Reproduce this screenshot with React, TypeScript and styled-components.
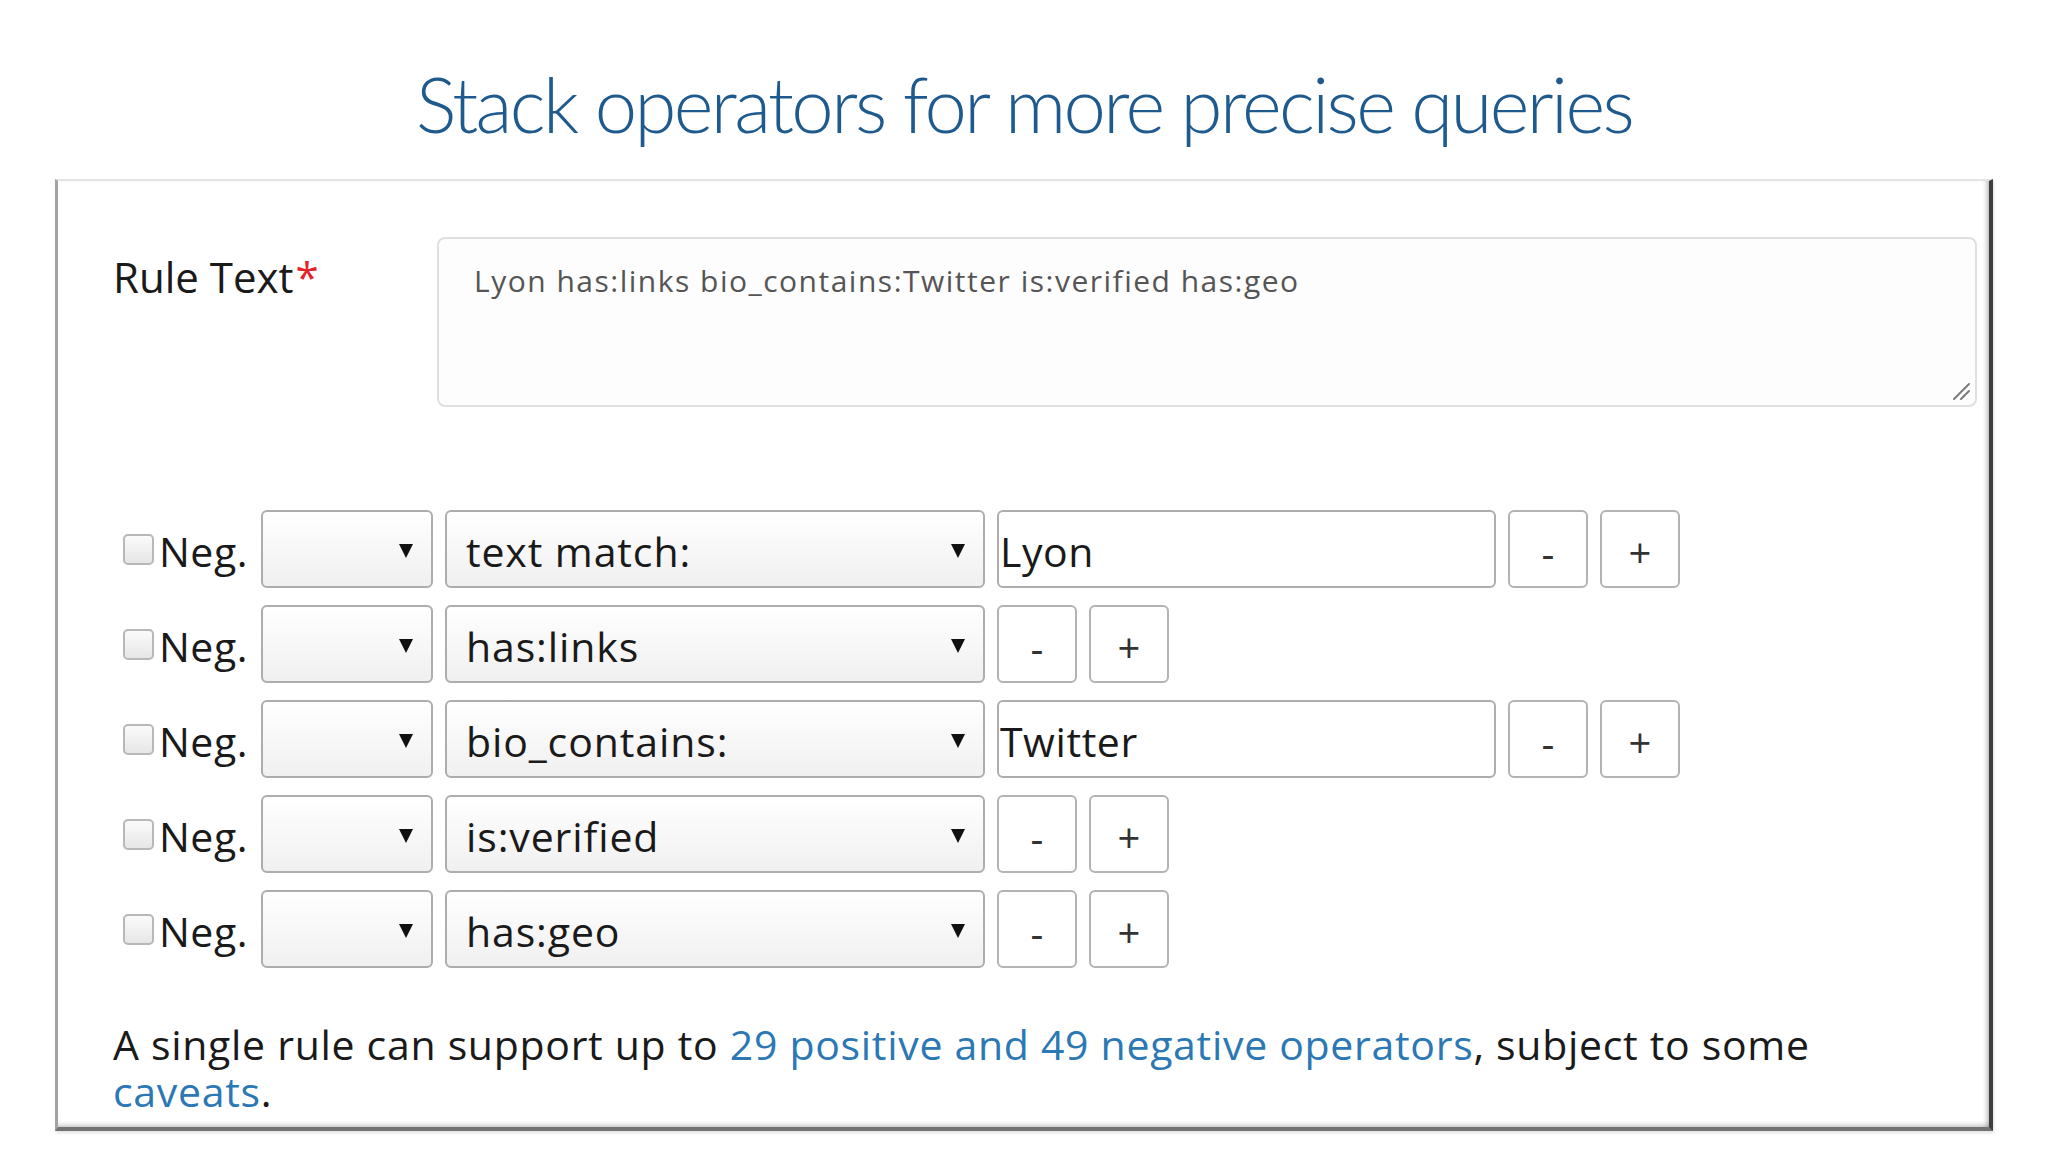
import React from "react";
import styled, { createGlobalStyle } from "styled-components";

const GlobalStyle = createGlobalStyle`
  html, body {
    margin: 0;
    padding: 0;
    background: #ffffff;
  }
  body {
    width: 2048px;
    height: 1152px;
    overflow: hidden;
    font-family: "Open Sans", "Liberation Sans", sans-serif;
    color: #1a1a1a;
  }
`;

const Page = styled.div`
  width: 2048px;
  height: 1152px;
  display: flex;
  flex-direction: column;
  align-items: flex-start;
`;

const Title = styled.h1`
  align-self: stretch;
  margin: 66px 0 0 0;
  text-align: center;
  font-family: "Lato", "Open Sans", sans-serif;
  font-weight: 300;
  font-size: 76px;
  line-height: 76px;
  letter-spacing: -2.6px;
  color: #1f5a8e;
`;

const Panel = styled.section`
  box-sizing: border-box;
  margin: 37px 0 0 55px;
  width: 1938px;
  height: 952px;
  background: #ffffff;
  border-top: 2px solid #e4e4e4;
  border-left: 3px solid #a3a3a3;
  border-right: 4px solid #3e3e3e;
  border-bottom: 4px solid #737373;
  box-shadow: inset -5px 0 5px -3px rgba(0, 0, 0, 0.28),
    inset 0 -5px 5px -3px rgba(0, 0, 0, 0.22), 1px 2px 3px rgba(0, 0, 0, 0.12);
  padding: 56px 12px 0 55px;
  display: flex;
  flex-direction: column;
`;

const RuleRow = styled.div`
  display: grid;
  grid-template-columns: 324px 1fr;
  align-items: start;
`;

const Label = styled.label`
  padding-top: 15px;
  font-size: 42px;
  line-height: 1.2;
  color: #1a1a1a;
`;

const Required = styled.span`
  color: #e5232b;
  margin-left: 2px;
`;

const TextAreaBox = styled.div`
  position: relative;
  box-sizing: border-box;
  height: 170px;
  border: 2px solid #e0e0e0;
  border-radius: 8px;
  background: #fdfdfd;
  padding: 24px 35px;
  font-size: 30px;
  letter-spacing: 1.5px;
  line-height: 1.2;
  color: #555555;
`;

const Grip = styled.svg`
  position: absolute;
  right: 3px;
  bottom: 3px;
  width: 20px;
  height: 20px;
`;

const Operators = styled.div`
  margin-top: 103px;
  padding-left: 10px;
  display: flex;
  flex-direction: column;
  gap: 17px;
`;

const OpRow = styled.div`
  display: flex;
  align-items: center;
  height: 78px;
  gap: 12px;
`;

const NegGroup = styled.div`
  display: flex;
  align-items: center;
  gap: 5px;
  margin-right: 1px;
`;

const CheckBox = styled.span`
  box-sizing: border-box;
  width: 31px;
  height: 31px;
  border: 2px solid #b8b8b8;
  border-radius: 5px;
  background: linear-gradient(#fbfbfb, #e6e6e6);
`;

const NegLabel = styled.span`
  font-size: 41px;
  letter-spacing: 0.5px;
  line-height: 1.2;
  padding-top: 6px;
  color: #1a1a1a;
`;

const Select = styled.div<{ $w: number }>`
  position: relative;
  box-sizing: border-box;
  width: ${(p) => p.$w}px;
  height: 78px;
  border: 2px solid #adadad;
  border-radius: 6px;
  background: linear-gradient(#ffffff, #f0f0f0);
  display: flex;
  align-items: center;
  padding: 6px 0 0 19px;
  font-size: 41px;
  letter-spacing: 0.9px;
  line-height: 1.2;
  color: #1a1a1a;
`;

const Arrow = styled.span`
  position: absolute;
  right: 18px;
  top: 32px;
  width: 0;
  height: 0;
  border-left: 7px solid transparent;
  border-right: 7px solid transparent;
  border-top: 14px solid #111111;
`;

const TextInput = styled.div`
  box-sizing: border-box;
  width: 499px;
  height: 78px;
  border: 2px solid #adadad;
  border-radius: 6px;
  background: #ffffff;
  display: flex;
  align-items: center;
  padding: 6px 0 0 1px;
  font-size: 41px;
  letter-spacing: 0.6px;
  line-height: 1.2;
  color: #1a1a1a;
`;

const StepButton = styled.button`
  box-sizing: border-box;
  width: 80px;
  height: 78px;
  margin: 0;
  border: 2px solid #b3b3b3;
  border-radius: 6px;
  background: #ffffff;
  font-family: "Open Sans", "Liberation Sans", sans-serif;
  font-size: 40px;
  line-height: 1;
  padding: 8px 0 0 0;
  color: #333333;
`;

const Note = styled.p`
  margin: 53px 0 0 0;
  max-width: 1760px;
  font-size: 41px;
  letter-spacing: 0.7px;
  line-height: 47px;
  color: #1a1a1a;
`;

const Link = styled.a`
  color: #2b78b4;
  text-decoration: none;
`;

type Op = { op: string; value?: string };

const ops: Op[] = [
  { op: "text match:", value: "Lyon" },
  { op: "has:links" },
  { op: "bio_contains:", value: "Twitter" },
  { op: "is:verified" },
  { op: "has:geo" },
];

export default function App() {
  return (
    <Page>
      <GlobalStyle />
      <Title>Stack operators for more precise queries</Title>
      <Panel>
        <RuleRow>
          <Label>
            Rule Text<Required>*</Required>
          </Label>
          <TextAreaBox>
            Lyon has:links bio_contains:Twitter is:verified has:geo
            <Grip viewBox="0 0 20 20">
              <line x1="2" y1="17" x2="17" y2="2" stroke="#7a7a7a" strokeWidth="2" strokeLinecap="round" />
              <line x1="9" y1="17" x2="17" y2="9" stroke="#7a7a7a" strokeWidth="2" strokeLinecap="round" />
            </Grip>
          </TextAreaBox>
        </RuleRow>
        <Operators>
          {ops.map((o) => (
            <OpRow key={o.op}>
              <NegGroup>
                <CheckBox />
                <NegLabel>Neg.</NegLabel>
              </NegGroup>
              <Select $w={172}>
                <Arrow />
              </Select>
              <Select $w={540}>
                {o.op}
                <Arrow />
              </Select>
              {o.value !== undefined && <TextInput>{o.value}</TextInput>}
              <StepButton>-</StepButton>
              <StepButton>+</StepButton>
            </OpRow>
          ))}
        </Operators>
        <Note>
          A single rule can support up to{" "}
          <Link href="#">29 positive and 49 negative operators</Link>, subject to some{" "}
          <Link href="#">caveats</Link>.
        </Note>
      </Panel>
    </Page>
  );
}
